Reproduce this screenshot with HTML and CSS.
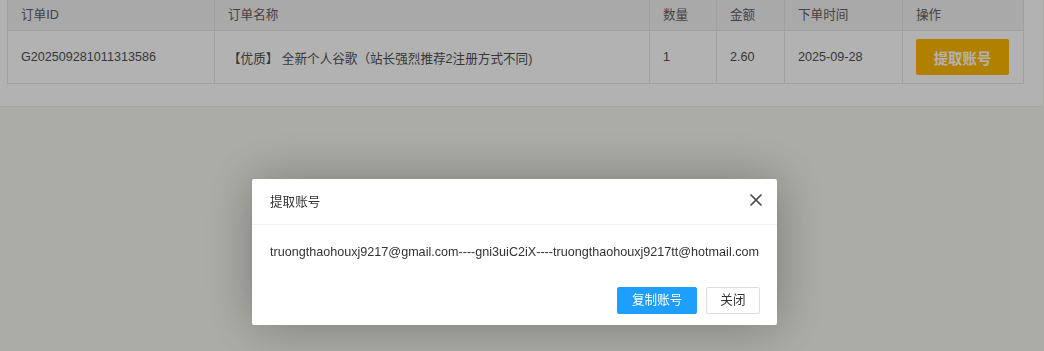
FILE: index.html
```html
<!DOCTYPE html>
<html lang="zh-CN">
<head>
<meta charset="utf-8">
<title>订单</title>
<link rel="stylesheet" href="styles.css">
</head>
<body>
<div class="page">
  <div class="card">
    <table class="orders">
      <colgroup>
        <col class="c-id"><col class="c-name"><col class="c-qty"><col class="c-amt"><col class="c-time"><col class="c-op">
      </colgroup>
      <thead>
        <tr><th>订单ID</th><th>订单名称</th><th>数量</th><th>金额</th><th>下单时间</th><th>操作</th></tr>
      </thead>
      <tbody>
        <tr>
          <td>G202509281011313586</td>
          <td>【优质】 全新个人谷歌（站长强烈推荐2注册方式不同)</td>
          <td>1</td>
          <td>2.60</td>
          <td>2025-09-28</td>
          <td><button class="btn-warm" type="button">提取账号</button></td>
        </tr>
      </tbody>
    </table>
  </div>
</div>

<div class="shade"></div>

<div class="layer">
  <div class="layer-title">
    <span>提取账号</span>
    <button class="layer-close" type="button" aria-label="关闭">
      <svg width="12" height="12" viewBox="0 0 12 12"><path d="M1 1 L11 11 M11 1 L1 11" stroke="#4a4a4a" stroke-width="1.7" fill="none" stroke-linecap="round"/></svg>
    </button>
  </div>
  <div class="layer-content">truongthaohouxj9217@gmail.com----gni3uiC2iX----truongthaohouxj9217tt@hotmail.com</div>
  <div class="layer-btns">
    <a class="lbtn lbtn-primary">复制账号</a>
    <a class="lbtn">关闭</a>
  </div>
</div>
</body>
</html>
```
FILE: styles.css
```css
* { box-sizing: border-box; }
html, body { margin: 0; padding: 0; }
body {
  background: #f6f6ef;
  font-family: "Liberation Sans", "Noto Sans CJK SC", sans-serif;
  font-size: 12.6px;
  color: #5f5f5f;
  height: 351px;
  overflow: hidden;
}
.page { width: 1043px; }
.card {
  background: #fff;
  padding: 0 20px 22px 7px;
  margin-top: -4px;
  border-bottom: 1px solid #ececec;
}
.orders {
  border-collapse: collapse;
  table-layout: fixed;
  width: 1016px;
  border: 1px solid #e6e6e6;
}
.c-id { width: 207px; }
.c-name { width: 435px; }
.c-qty { width: 67px; }
.c-amt { width: 68px; }
.c-time { width: 118px; }
.c-op { width: 121px; }
.orders th, .orders td {
  border: 1px solid #e6e6e6;
  text-align: left;
  font-weight: normal;
  padding: 0 13px;
  white-space: nowrap;
}
.orders th {
  background: #f2f2f2;
  height: 34px;
  color: #606060;
}
.orders td {
  height: 53px;
  color: #505050;
}
.btn-warm {
  background: #ffb800;
  color: #fff;
  border: 0;
  border-radius: 2px;
  height: 36px;
  width: 93px;
  padding: 0;
  font-family: inherit;
  font-size: 14.4px;
  font-weight: bold;
  display: block;
}
.shade {
  position: fixed;
  inset: 0;
  background: rgba(0, 0, 0, 0.3);
}
.layer {
  position: fixed;
  left: 252px;
  top: 179px;
  width: 525px;
  background: #fff;
  border-radius: 2px;
  box-shadow: 1px 1px 50px rgba(0, 0, 0, 0.3);
  color: #333;
}
.layer-title {
  height: 46px;
  padding: 0 15px 0 18px;
  border-bottom: 1px solid #f0f0f0;
  display: flex;
  align-items: center;
  justify-content: space-between;
  font-size: 12.6px;
  color: #333;
}
.layer-title span { margin-top: -3px; }
.layer-close {
  border: 0;
  background: none;
  padding: 0;
  width: 12px;
  height: 12px;
  display: flex;
  margin-top: -3px;
}
.layer-content {
  padding: 18px 18px 0;
  line-height: 19px;
  font-size: 12.6px;
  white-space: nowrap;
}
.layer-btns {
  display: flex;
  justify-content: flex-end;
  gap: 9px;
  padding: 25px 17px 11px;
}
.lbtn {
  display: block;
  height: 27px;
  line-height: 25px;
  padding: 0 13.5px;
  border: 1px solid #dedede;
  border-radius: 2px;
  background: #fff;
  color: #333;
  font-size: 12.6px;
}
.lbtn-primary {
  background: #1e9fff;
  border-color: #1e9fff;
  color: #fff;
}
```
